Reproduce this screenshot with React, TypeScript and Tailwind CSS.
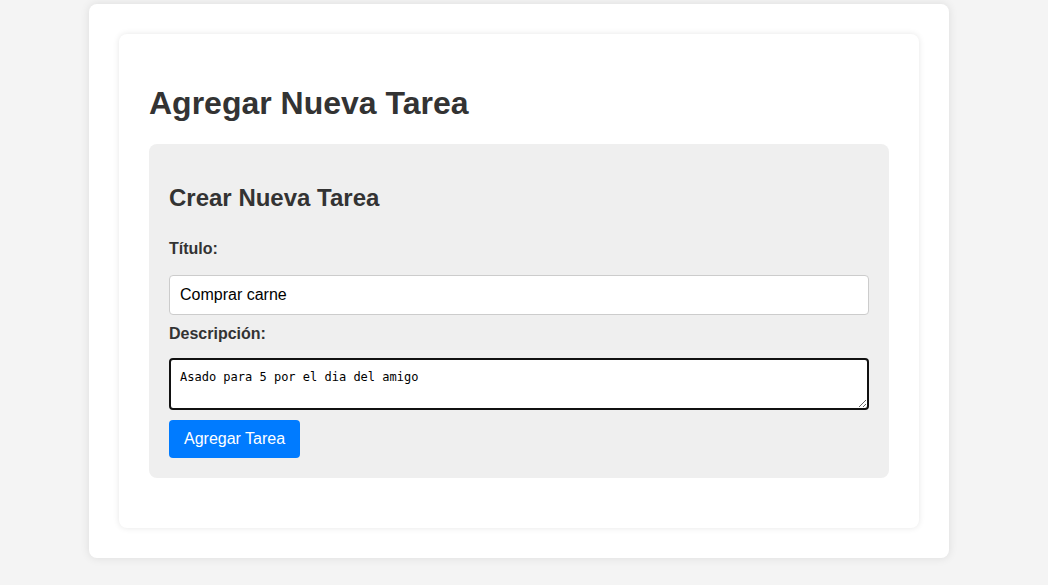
export default function App() {
  return (
    <div className="min-h-screen w-full bg-[#f4f4f4] pt-[4px] font-['Liberation_Sans',Arial,sans-serif] text-[#333]">
      <div className="ml-[89px] w-[860px] rounded-[8px] bg-white p-[30px] shadow-[0_0_10px_rgba(0,0,0,0.1)]">
        <div className="rounded-[8px] bg-white px-[30px] pt-[30px] pb-[50px] shadow-[0_0_6px_rgba(0,0,0,0.1)]">
          <h1 className="mt-[21px] mb-[22px] text-[32px] leading-[37px] font-bold">Agregar Nueva Tarea</h1>
          <form className="flex flex-col rounded-[8px] bg-[#efefef] px-[20px] pt-[20px] pb-[20px]">
            <h2 className="mt-[20px] mb-[28px] text-[24px] leading-[28px] font-bold">Crear Nueva Tarea</h2>
            <label className="mb-[17px] text-[16px] leading-[18px] font-bold">Título:</label>
            <input
              type="text"
              defaultValue="Comprar carne"
              className="h-[40px] w-full rounded-[4px] border border-[#ccc] bg-white px-[10px] text-[16px] text-black outline-none"
            />
            <label className="mt-[10px] mb-[15px] text-[16px] leading-[18px] font-bold">Descripción:</label>
            <textarea
              defaultValue="Asado para 5 por el dia del amigo"
              className="h-[52px] w-full resize-y rounded-[4px] border-2 border-[#111] bg-white px-[9px] pt-[10px] font-['DejaVu_Sans_Mono',monospace] text-[12px] leading-[14px] text-black outline-none"
            />
            <div className="mt-[10px]">
              <button
                type="button"
                className="h-[38px] rounded-[4px] bg-[#007bff] px-[15px] text-[16px] text-white"
              >
                Agregar Tarea
              </button>
            </div>
          </form>
        </div>
      </div>
    </div>
  );
}
